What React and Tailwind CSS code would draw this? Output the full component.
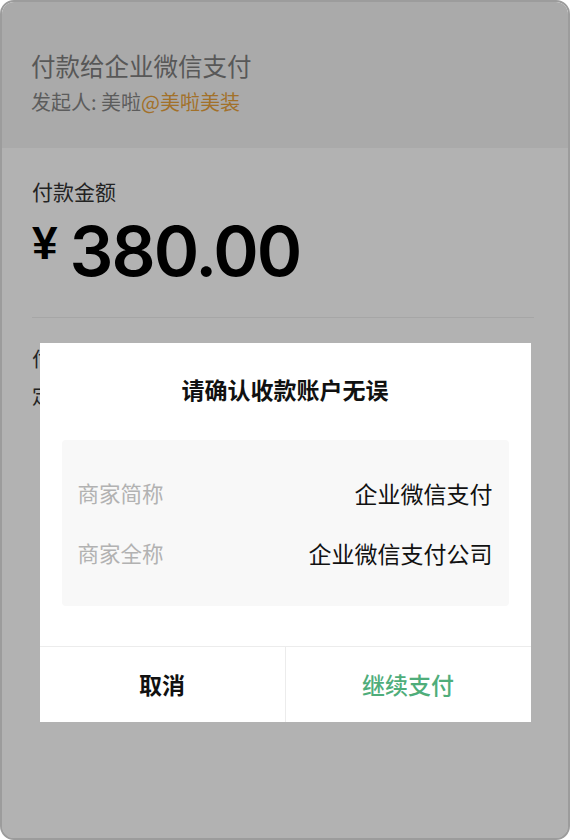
import React from "react";

const cjk = { fontFamily: '"Noto Sans CJK SC", "Noto Sans", sans-serif' };

const InfoRow = ({ label, value }) => (
  <div className="flex items-center justify-between h-[60px]">
    <span className="text-[21.5px] text-[#b2b2b2]">{label}</span>
    <span className="text-[23px] text-[#111]">{value}</span>
  </div>
);

const App = () => {
  return (
    <div className="w-[570px] h-[840px] bg-white" style={cjk}>
      <div className="relative w-full h-full border-2 border-[#9c9c9c] rounded-[14px] overflow-hidden bg-white">
        {/* page under the dialog */}
        <div className="h-[146px] bg-[#f4f4f4] px-[29px] pt-[47px]">
          <div className="text-[24.5px] leading-[34px] text-[#7f7f7f]">付款给企业微信支付</div>
          <div className="text-[20px] leading-[28px] text-[#858585] mt-[5px]">
            发起人: 美啦<span className="text-[#e9a23b]">@美啦美装</span>
          </div>
        </div>
        <div className="px-[30px] pt-[28px]">
          <div className="text-[21px] leading-[30px] text-[#333]">付款金额</div>
          <div className="flex items-start mt-[12px] text-black">
            <span className="text-[46px] leading-[46px] font-bold mt-[2px]" style={{ fontFamily: '"Liberation Sans", Arial, sans-serif' }}>¥</span>
            <span className="text-[69px] leading-[66px] font-semibold ml-[12px] tracking-[-2px]" style={{ fontFamily: 'Inter, "Liberation Sans", sans-serif' }}>380.00</span>
          </div>
          <div className="h-px bg-[#eeeeee] mt-[33px] mr-[4px]"></div>
          <div className="text-[20px] leading-[37px] text-[#333] mt-[22px]">
            <div>付款</div>
            <div>定</div>
          </div>
        </div>

        {/* mask + dialog */}
        <div className="absolute inset-0 bg-black/30 flex flex-col items-center pt-[341px]">
          <div className="w-[491px] bg-white">
            <div className="text-center text-[23px] font-semibold text-[#111] pt-[27px] leading-[38px]">
              请确认收款账户无误
            </div>
            <div className="mx-[22px] mt-[32px] bg-[#f8f8f8] rounded-[4px] px-[16px] py-[23px]">
              <InfoRow label="商家简称" value="企业微信支付" />
              <InfoRow label="商家全称" value="企业微信支付公司" />
            </div>
            <div className="mt-[40px] border-t border-[#ececec] flex h-[76px]">
              <button className="flex-1 text-[23px] font-semibold text-[#111] border-r border-[#ececec]">取消</button>
              <button className="flex-1 text-[23px] font-medium text-[#4fad7a]">继续支付</button>
            </div>
          </div>
        </div>
      </div>
    </div>
  );
};

export default App;
